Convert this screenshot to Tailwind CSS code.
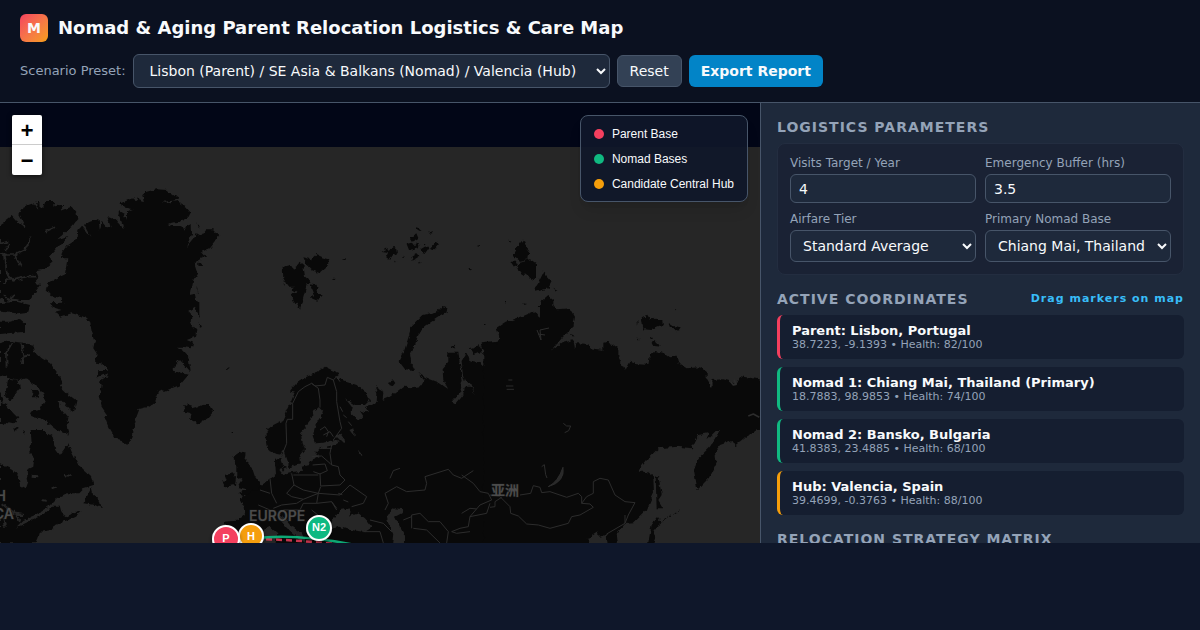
<!DOCTYPE html>
<html lang="en">

<head>
    <meta charset="UTF-8">
    <meta name="viewport" content="width=device-width, initial-scale=1.0">
    <script src="https://cdn.jsdelivr.net/npm/@tailwindcss/browser@4"></script>
    <title>Nomad &amp; Aging Parent Relocation Logistics &amp; Care Map</title>
</head>

<body class="h-screen flex flex-col overflow-hidden bg-[#0f172a] pb-[87px] font-['DejaVu_Sans',sans-serif] text-sm text-slate-50">
    <header class="flex flex-col gap-3 px-5 py-3.5 bg-[#0b1120] border-b border-[#475569]">
        <div class="flex items-center gap-2.5">
            <div class="size-7 rounded-md bg-linear-to-br from-[#f43f5e] to-[#f59e0b] flex items-center justify-center font-bold text-sm">M</div>
            <h1 class="text-lg leading-7 font-bold">Nomad &amp; Aging Parent Relocation Logistics &amp; Care Map</h1>
        </div>
        <div class="flex items-center gap-[7px]">
            <label for="preset" class="text-[13px] text-[#94a3b8]">Scenario Preset:</label>
            <select id="preset" class="h-[34px] w-[477px] px-3 rounded-md border border-[#475569] bg-[#1e293b]">
                <option>Lisbon (Parent) / SE Asia &amp; Balkans (Nomad) / Valencia (Hub)</option>
            </select>
            <button type="button" class="h-8 px-3 rounded-md border border-[#475569] bg-[#334155]">Reset</button>
            <button type="button" class="h-8 px-3 rounded-md bg-[#0284c7] font-bold">Export Report</button>
        </div>
    </header>

    <main class="flex flex-1 min-h-0">
        <!-- map -->
        <section class="relative flex-1 min-w-0 overflow-hidden bg-[#020617]">
            <svg class="block size-full" viewBox="0 103 760 440" preserveAspectRatio="xMinYMin slice" role="img" aria-label="World map">
                <defs>
                    <filter id="coast" x="0" y="0" width="100%" height="100%" color-interpolation-filters="sRGB">
                        <feTurbulence type="fractalNoise" baseFrequency="0.2" numOctaves="2" seed="4" />
                        <feDisplacementMap in="SourceGraphic" scale="5" xChannelSelector="R" yChannelSelector="G" />
                    </filter>
                    <filter id="shade" x="-30%" y="-30%" width="160%" height="160%">
                        <feDropShadow dx="0" dy="2" stdDeviation="2" flood-color="#000" flood-opacity=".5" />
                    </filter>
                </defs>
                <rect x="0" y="147" width="1600" height="900" fill="#262626" />
                <g filter="url(#coast)" fill="#090909">
                    <rect x="0" y="147" width="760" height="396" fill="#262626" />
                    <!-- Greenland, Ellesmere -->
                    <g transform="translate(0 140) scale(.3333)">
                        <path d="M183 355L187 335 200 318 215 308 232 300 235 270 245 258 272 292 252 254 270 245 295 237 300 270 305 245 320 262 332 262 325 240 322 228 345 238 360 255 374 268 368 245 352 220 356 213 372 222 378 240 378 215 388 210 402 208 365 200 362 190 385 180 400 172 408 186 414 170 425 188 432 188 427 165 440 155 470 148 500 150 520 165 535 175 520 182 485 185 500 190 535 182 542 192 560 203 572 218 565 232 545 242 502 252 520 258 545 258 553 272 560 258 575 252 576 280 565 305 558 322 580 295 590 280 605 288 620 268 640 268 658 288 645 305 630 325 605 335 618 350 600 358 588 365 585 378 592 400 580 420 575 445 572 465 585 462 588 480 598 490 598 530 585 500 565 512 580 530 570 545 590 570 585 590 560 600 580 608 575 625 550 620 530 620 548 632 565 650 572 695 540 660 515 690 565 705 540 735 515 745 490 755 480 750 465 785 445 800 415 808 405 835 410 845 398 870 395 890 385 915 365 900 345 895 325 860 315 835 322 825 305 800 298 775 305 735 300 722 320 710 325 700 290 715 295 690 325 690 300 670 285 668 290 640 280 625 285 600 275 570 270 545 258 535 235 525 215 520 180 530 165 515 185 510 155 500 150 490 190 488 188 475 155 468 135 445 145 430 170 415 198 402 202 375 205 355Z" />
                        <path d="M0 255L20 240 35 228 50 245 75 262 55 225 70 200 100 190 115 210 110 185 130 205 135 183 160 183 165 200 180 195 195 195 180 212 215 200 230 220 232 240 215 260 172 298 205 288 180 315 150 350 155 370 135 385 110 390 118 410 105 425 120 435 105 455 88 480 60 480 40 475 20 485 0 475Z" />
                        <path d="M0 490L50 485 90 495 85 515 50 520 0 515ZM0 545L30 545 60 537 75 550 75 575 0 582ZM590 250l6 14-4 2zM595 365l12 2-2 12-10-2zM590 440l4 15-3 5zM595 500l3 30-4-5zM598 550l6 14-8-2z" />
                        <path d="M-10 335L20 345 45 345 75 330 95 290M45 345L65 382M15 345L20 400 40 420 80 410 110 410M10 430L30 415M0 310L25 305M15 330L30 310M50 240L75 262M135 275L165 262M10 465L25 480 45 465" fill="none" stroke="#262626" stroke-width="5" />
                    </g>
                    <!-- Baffin, Labrador, Iceland, British Isles -->
                    <g transform="translate(0 330) scale(.3333)">
                        <path d="M0 40L25 33 70 38 100 45 105 65 125 85 150 100 170 125 185 155 180 170 200 190 230 212 222 245 205 235 190 215 175 215 180 235 205 265 200 285 205 315 170 300 150 285 125 265 95 262 90 245 120 240 135 215 130 190 100 160 80 145 60 150 0 135ZM25 145L55 150 60 175 45 195 30 215 15 195ZM0 215L20 225 40 250 55 265 40 280 20 275 10 285 0 280ZM98 180l12 0 8 10-6 12-12 0-4-10zM40 295l12-4 4 6-12 8zM70 300l8 4-4 10zM0 185L8 200 5 215 0 212Z" />
                        <path d="M92 300L125 300 155 318 165 355 180 375 205 340 215 365 235 405 270 435 280 465 250 475 235 490 200 490 170 505 145 530 105 555 70 570 45 595 85 575 120 560 160 530 180 530 185 550 200 560 240 545 200 570 165 585 155 600 120 605 115 625 108 640 0 640 0 400 40 420 55 440 60 465 78 475 85 455 80 420 100 410 102 385 88 370 95 335ZM250 520L262 500 275 475 280 495 300 515 305 535 285 525ZM190 565L215 552 245 543 225 560 200 572Z" />
                        <path d="M550 228L565 220 575 235 600 228 625 222 640 245 620 268 595 282 570 270 575 250 555 245ZM700 380L720 365 740 372 735 395 755 410 765 440 795 480 795 495 765 505 715 490 740 478 712 470 725 450 712 440 712 410 705 395ZM675 435L700 430 708 440 705 465 675 472 668 460 680 450ZM678 115l10-7 0 3-8 7zM695 303h4v3h-4z" />
                        <path d="M20 110L18 70 35 40M65 40L70 80 90 75M70 80L65 105M5 520L40 550 70 555M10 565L15 590M95 440L115 442M190 435L215 438M155 475l15-6M125 510l15 3M40 540L60 575" fill="none" stroke="#262626" stroke-width="6" />
                    </g>
                    <!-- Europe, western Russia -->
                    <g transform="translate(240 350) scale(.3333)">
                        <path d="M80 240L100 225 130 210 140 185 155 150 165 125 150 122 170 100 200 80 225 70 255 50 275 60 300 70 285 80 320 95 350 105 380 130 390 150 375 165 345 165 315 145 335 170 332 190 355 212 370 195 360 180 385 190 375 175 410 155 412 130 405 112 430 125 428 150 450 140 490 110 520 112 545 108 555 90 535 68 560 85 600 100 625 118 610 90 608 55 625 35 625 5 655 5 660 45 668 90 660 125 635 155 650 160 670 135 675 110 695 110 705 135 695 100 675 95 668 70 665 30 680 5 690 35 720 40 745 65 735 20 722 -20 775 -25 785 -70 820 -85 820 595 -45 595 -45 515 -10 512 15 495 10 465 0 445 30 430 55 415 90 385 108 372 105 330 130 315 110 312 85 300 80 270Z" />
                        <path fill="#262626" d="M120 315L130 300 140 330 150 355 165 345 180 340 178 320 195 300 190 285 183 255 195 230 215 205 220 180 240 172 252 185 235 210 225 230 218 260 225 280 250 278 280 270 300 275 285 285 240 295 225 310 240 318 215 330 205 345 185 350 190 365 150 370 130 375 118 360 130 345ZM290 260L300 250 315 270 310 280ZM328 240L340 235 345 260ZM285 500L300 480 330 475 335 490 325 500 355 490 375 505 395 530 370 545 330 540 300 530 280 535 270 520ZM440 495L465 475 490 478 485 490 465 500 480 530 495 560 495 595 455 595 460 550 445 520ZM115 492L130 500 150 525 185 550 200 579 180 570 150 545 125 515ZM60 545L90 530 112 550 105 595 40 595ZM355 300l10 5 2 10-10-4z" />
                        <path d="M105 340L115 325 120 345 112 358ZM122 350l15 2-8 10z" />
                    </g>
                    <!-- Arctic islands -->
                    <g transform="translate(240 220) scale(.3333)">
                        <path d="M610 258L622 262 620 278 595 292 570 308 550 325 535 345 525 375 510 400 515 430 525 450 495 448 478 425 490 400 500 370 515 320 550 285 590 275ZM128 140L150 135 160 150 170 145 178 125 190 135 195 170 215 185 200 195 190 230 180 268 160 240 155 220 170 218 155 208 165 200 145 200 130 175ZM190 112L215 118 230 105 245 112 268 118 262 140 240 160 215 150 200 135ZM210 190L225 192 232 215 245 225 232 242 215 235 222 220ZM128 180l8 18-4-4zM305 120l15-6 0 4-12 4zM275 178l12-2-4 5z" />
                        <path d="M422 95l18-10 6 8 12-12 14 4 2 14-16 6-10 14-10-8 6-12zM500 72l14-4 12 8-2 14-16 2zM512 55l14-12 6 14-14 8zM530 25l12 3-10 4zM568 34l12 4-8 3zM542 88l16-10 8 10-10 14-12-4zM570 84l18-20 6 12-10 12zM514 110l16-10 8 10-20 12zM484 112l8-6 2 8zM526 70l10-4 2 12-8 6zM550 70l10 2-6 6zM710 78l10-3 0 6zM685 145l12 4-8 2zM448 485l12-4 6 8-8 10-10-4zM632 378l12-4 4 10-14 2zM732 310l6 4-6 2zM462 122l10 4-6 4zM538 122l8 4-6 4zM690 385L720 375 725 395 700 405Z" />
                    </g>
                    <!-- Siberia, Far East -->
                    <g transform="translate(490 220) scale(.3333)">
                        <path d="M-20 370L20 370 30 355 20 325 50 305 100 288 130 275 150 290 150 250 175 228 190 240 190 255 200 268 240 265 255 290 250 320 215 355 185 392 215 370 250 360 255 385 260 370 295 372 300 385 340 390 340 368 355 365 365 378 385 375 385 410 405 450 418 425 435 432 475 435 480 405 495 393 525 400 540 412 560 410 565 430 590 445 630 442 650 455 650 475 665 500 665 480 700 478 725 485 740 495 750 468 830 482 830 635 800 628 770 650 740 675 725 663 690 675 675 695 680 730 660 770 622 810 612 750 625 715 660 680 690 630 680 630 650 660 655 640 625 645 605 685 560 680 505 685 475 715 443 755 470 755 490 770 492 820 470 870 430 910 405 912 380 940 385 985 355 985 350 945 325 950 325 935 290 958 310 985 -20 985Z" />
                        <path d="M85 75L100 58 110 85 118 95 115 118 90 122 68 108ZM62 125L80 125 85 135 72 140ZM90 125L120 118 138 130 138 175 125 180 105 165 82 150ZM160 155L168 165 185 185 175 205 135 215 145 185ZM55 62l12 3-6 4zM190 203l12 6-4 3zM100 250l10 2-6 3zM455 292L470 285 480 300 492 290 505 300 520 300 522 315 505 322 485 330 460 328ZM535 308L550 318 572 322 565 332 540 322ZM480 350l8 0 0 8-6 0zM485 370L500 362 510 380 490 378ZM442 300l4 2-2 12zM443 352l6 6-4 0zM555 264l4 2-4 2zM240 342l12 4-6 8zM47 243h4v4h-4z" />
                        <path d="M497 765L505 770 515 825 505 840 520 865 500 865 498 800ZM485 915L500 895 520 905 500 920 488 935 497 950 485 985 472 985 480 940Z" />
                        <path d="M520 900L545 885 570 870" fill="none" stroke="#090909" stroke-width="3" stroke-dasharray="12 5" />
                    </g>
                </g>
                <!-- lakes, rivers and borders -->
                <g fill="none" stroke="#2c2c2c" stroke-width="3" stroke-linejoin="round">
                    <g transform="translate(240 350) scale(.3333)">
                        <path d="M130 305L140 280 138 220 142 208 158 208 158 160 175 125 195 110 215 100 235 115 240 150 240 172M215 100L225 108 255 105 262 82 280 90 290 80 300 95M280 90L290 125 290 155 300 215 305 235 280 270M275 285L270 310 275 345M240 295L275 295M215 320L245 318 270 340 275 345M218 345L255 342 262 362 240 372 220 365M275 345L295 350 300 375 315 390 300 405 242 408 240 370M155 370L162 405 190 420 235 430 242 410M160 375L235 375M90 385L95 430 110 460M162 405L140 430 155 440 190 448 170 460 125 465 100 475M190 448L235 430 230 460 190 460 180 480 130 480M230 460L275 455 290 480M235 430L300 435 330 405 380 440 370 460 335 470M275 455L290 475M215 480L240 500M390 510L430 520 455 545M370 545L420 545 430 579M60 420L90 430M55 465L90 480" />
                        <path d="M435 480L445 460 435 430 470 410 500 425 555 420 560 400 555 380 625 358 640 375 665 385 700 362M665 375L700 400 720 425 745 430 755 450 720 465 690 500 685 530 660 535 635 545M515 535V495L540 490 565 515 600 515 625 545 620 579M490 510L515 500M635 545L650 550 690 545M520 535L560 540 600 579M450 385L460 362 480 355M665 490L690 475 710 477M690 500L740 490 750 460M240 240l15-10 10 15M250 255l20-10 10 15M260 260l5-15M300 170l8 15M310 195l10 8M325 215l10 12M310 450l15 6M295 430l12 4" />
                    </g>
                    <g transform="translate(490 380) scale(.3333)">
                        <path d="M0 345L30 350 60 380 62 400 85 408 110 432 145 435 180 445 235 430 245 410 270 405 310 382 300 372 275 370 275 350 265 340 230 352 180 335 155 338 150 322 130 317 122 340 90 345M275 370L290 350 310 340 310 305 330 295 355 300 375 345 405 365 435 368 415 405 405 430 350 462M405 405L405 430M0 382L15 380 15 365 35 352M155 260l8-6 4 30 4 10M220 130l10 8 12 0-6 14-12 6M55 0h12M48 18h22M50 28l22 0" />
                        <path d="M219 262Q226 305 175 320Q205 305 219 262Z" fill="#292929" />
                        <path d="M665 0L662 22M722 5l8 10 8-2-6-14M775 108l15-6 18 10" stroke-width="5" />
                    </g>
                    <path d="M537 330L541 340 540 330 549 328M538 334L545 335" stroke-width="1" />
                </g>
                <g class="font-[Inter,sans-serif]" font-size="14" font-weight="600" fill="#4b4b4b" stroke="#151515" stroke-width="1" paint-order="stroke">
                    <text x="6" y="501" text-anchor="end">NORTH</text>
                    <text x="14" y="519" text-anchor="end">AMERICA</text>
                    <text x="249" y="521">EUROPE</text>
                    <text x="491" y="495" class="font-['Noto_Sans_CJK_SC',sans-serif]">亚洲</text>
                </g>
                <!-- routes -->
                <path d="M226 539Q290 538 350 546" fill="none" stroke="#f43f5e" stroke-opacity=".8" stroke-width="2.5" stroke-dasharray="6 4" />
                <path d="M226 544Q276 529 355 545" fill="none" stroke="#10b981" stroke-opacity=".9" stroke-width="2.5" />
                <!-- markers -->
                <g class="font-['Liberation_Sans',sans-serif]" font-size="11" font-weight="700" fill="#fff" text-anchor="middle">
                    <g filter="url(#shade)"><circle cx="319" cy="528" r="12" fill="#10b981" stroke="#fff" stroke-width="2" /></g>
                    <text x="319" y="531">N2</text>
                    <g filter="url(#shade)"><circle cx="251" cy="536" r="12" fill="#f59e0b" stroke="#fff" stroke-width="2" /></g>
                    <text x="251" y="540">H</text>
                    <g filter="url(#shade)"><circle cx="226" cy="539" r="13" fill="#f43f5e" stroke="#fff" stroke-width="2" /></g>
                    <text x="226" y="542">P</text>
                </g>
            </svg>

            <div class="absolute top-3 left-3 w-[30px] rounded-xs overflow-hidden bg-white shadow-[0_1px_5px_rgba(0,0,0,0.65)] font-['Liberation_Mono',monospace] text-[22px] font-bold text-black">
                <button type="button" aria-label="Zoom in" class="flex items-center justify-center w-full h-[30px] pt-1.5 border-b border-[#ccc]">+</button>
                <button type="button" aria-label="Zoom out" class="flex items-center justify-center w-full h-[30px] pt-1.5">−</button>
            </div>

            <ul class="absolute top-3 right-3 px-[13px] py-[5px] rounded-lg border border-[#475569] bg-[#0f172a]/90 shadow-lg font-['Liberation_Sans',sans-serif] text-xs">
                <li class="flex items-center gap-2 h-[25px]"><span class="size-2.5 rounded-full bg-[#f43f5e]"></span>Parent Base</li>
                <li class="flex items-center gap-2 h-[25px]"><span class="size-2.5 rounded-full bg-[#10b981]"></span>Nomad Bases</li>
                <li class="flex items-center gap-2 h-[25px]"><span class="size-2.5 rounded-full bg-[#f59e0b]"></span>Candidate Central Hub</li>
            </ul>
        </section>

        <!-- sidebar -->
        <aside class="w-[440px] shrink-0 overflow-hidden flex flex-col gap-4 p-4 bg-[#1e293b] border-l border-[#475569]">
            <section class="shrink-0">
                <h2 class="mb-2 text-sm leading-4 font-bold tracking-[1px] uppercase text-[#94a3b8]">Logistics Parameters</h2>
                <form class="grid grid-cols-2 gap-[9px] p-3 rounded-lg border border-[#232d40] bg-[#1a2234]">
                    <div class="flex flex-col gap-1">
                        <label for="visits" class="text-xs leading-[14px] text-[#94a3b8]">Visits Target / Year</label>
                        <input id="visits" type="text" value="4" class="w-full h-[29px] px-2 rounded-md border border-[#475569] bg-[#1e293b]">
                    </div>
                    <div class="flex flex-col gap-1">
                        <label for="buffer" class="text-xs leading-[14px] text-[#94a3b8]">Emergency Buffer (hrs)</label>
                        <input id="buffer" type="text" value="3.5" class="w-full h-[29px] px-2 rounded-md border border-[#475569] bg-[#1e293b]">
                    </div>
                    <div class="flex flex-col gap-1">
                        <label for="airfare" class="text-xs leading-[14px] text-[#94a3b8]">Airfare Tier</label>
                        <select id="airfare" class="w-full h-8 px-2 rounded-md border border-[#475569] bg-[#1e293b]">
                            <option>Standard Average</option>
                        </select>
                    </div>
                    <div class="flex flex-col gap-1">
                        <label for="base" class="text-xs leading-[14px] text-[#94a3b8]">Primary Nomad Base</label>
                        <select id="base" class="w-full h-8 px-2 rounded-md border border-[#475569] bg-[#1e293b]">
                            <option>Chiang Mai, Thailand</option>
                        </select>
                    </div>
                </form>
            </section>

            <section class="shrink-0">
                <h2 class="mb-2 flex justify-between text-sm leading-4 font-bold tracking-[1px] uppercase text-[#94a3b8]">
                    Active Coordinates
                    <span class="text-[11px] leading-4 normal-case text-[#38bdf8]">Drag markers on map</span>
                </h2>
                <ul class="flex flex-col gap-2">
                    <li class="px-3 py-2 rounded-md border-l-3 border-[#f43f5e] bg-[#151e30]">
                        <p class="text-[13px] leading-[15px] font-bold">Parent: Lisbon, Portugal</p>
                        <p class="text-[11px] leading-[13px] text-[#94a3b8]">38.7223, -9.1393 • Health: 82/100</p>
                    </li>
                    <li class="px-3 py-2 rounded-md border-l-3 border-[#10b981] bg-[#151e30]">
                        <p class="text-[13px] leading-[15px] font-bold">Nomad 1: Chiang Mai, Thailand (Primary)</p>
                        <p class="text-[11px] leading-[13px] text-[#94a3b8]">18.7883, 98.9853 • Health: 74/100</p>
                    </li>
                    <li class="px-3 py-2 rounded-md border-l-3 border-[#10b981] bg-[#151e30]">
                        <p class="text-[13px] leading-[15px] font-bold">Nomad 2: Bansko, Bulgaria</p>
                        <p class="text-[11px] leading-[13px] text-[#94a3b8]">41.8383, 23.4885 • Health: 68/100</p>
                    </li>
                    <li class="px-3 py-2 rounded-md border-l-3 border-[#f59e0b] bg-[#151e30]">
                        <p class="text-[13px] leading-[15px] font-bold">Hub: Valencia, Spain</p>
                        <p class="text-[11px] leading-[13px] text-[#94a3b8]">39.4699, -0.3763 • Health: 88/100</p>
                    </li>
                </ul>
            </section>

            <section class="shrink-0">
                <h2 class="text-sm leading-4 font-bold tracking-[1px] uppercase text-[#94a3b8]">Relocation Strategy Matrix</h2>
            </section>
        </aside>
    </main>
</body>

</html>
